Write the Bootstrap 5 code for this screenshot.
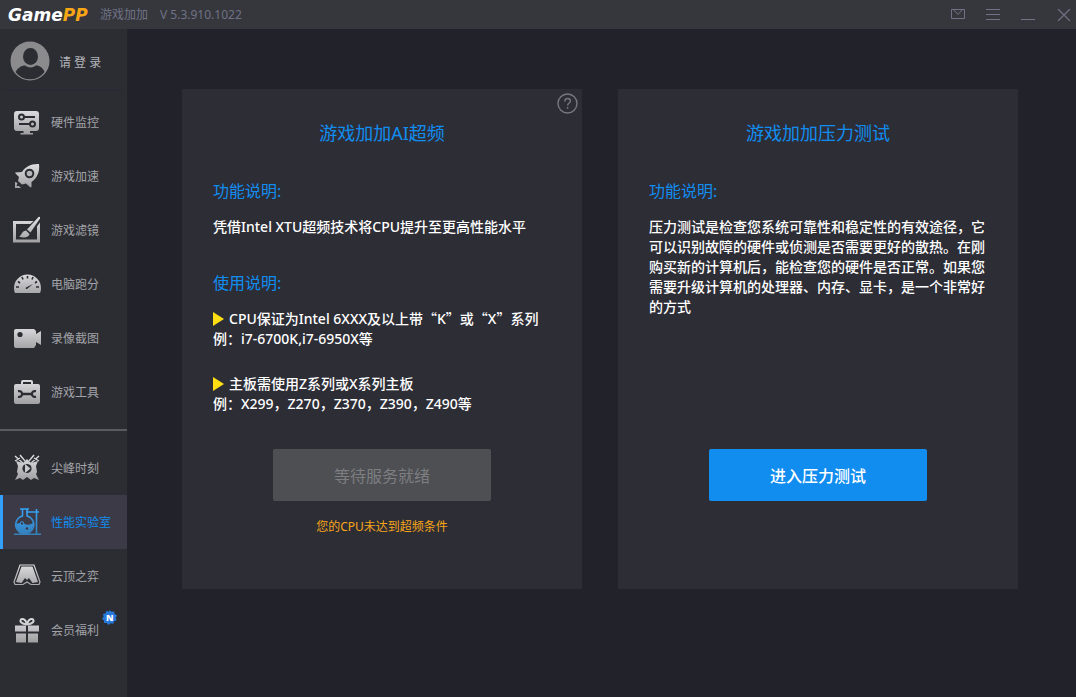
<!DOCTYPE html>
<html lang="zh-CN">
<head>
<meta charset="utf-8">
<meta name="viewport" content="width=device-width, initial-scale=1">
<title>GamePP 游戏加加</title>
<link href="https://cdn.jsdelivr.net/npm/bootstrap@5.3.0/dist/css/bootstrap.min.css" rel="stylesheet">
<style>
body { background: #22222b; color: #fff; font-family: "Noto Sans", "Noto Sans CJK SC", sans-serif; font-size: 14px; line-height: 20px; }
.titlebar { background: #36373c; height: 29px; color: #6f7286; font-size: 12px; }
.tools { gap: 20px; padding-right: 5px; }
.brand { font-family: "DejaVu Sans", sans-serif; font-weight: 700; font-style: italic; font-size: 17px; color: #fff; line-height: 28px; width: 92px; padding-left: 8px; }
.brand span { color: #f7a616; }
.winbtn { border: 0; background: none; color: #6f7286; padding: 0; width: 15px; height: 28px; display: flex; align-items: center; }
.side { width: 127px; background: #2c2d32; font-size: 12px; }
.login { height: 62px; color: #b4b5ba; padding-left: 10px; gap: 9px; text-decoration: none; }
.login svg { margin-top: 2px; }
.login span { padding-top: 6px; }
.sep-dark { height: 2px; margin: -2px 4px 4px; background: #292a34; }
.sep-light { height: 2px; background: #5a5b60; margin: 10px 0; }
.item { height: 54px; color: #a2a3a8; padding: 2px 0 0 12px; gap: 9px; border-radius: 0; position: relative; }
.item:hover { color: #fff; }
.item svg { width: 30px; height: 30px; flex: none; }
.item.active { background: #3b3a46; color: #118df0; box-shadow: inset 3px 0 #35a0fb; }
.item .newtag { position: absolute; left: 102px; top: 7px; width: 15px; height: 15px; }
.stage { padding: 60px 58px 60px 55px; }
.panels { display: grid; grid-template-columns: 1fr 1fr; gap: 36px; }
.panel { background: #2d2d36; min-height: 500px; padding: 30px 31px 28px; position: relative; }
.panel h1 { font-size: 18px; line-height: 28px; font-weight: 400; color: #118df0; text-align: center; margin: 0 0 32px; }
.panel h2 { font-size: 16px; line-height: 24px; font-weight: 400; color: #118df0; margin: 0 0 14px; }
.panel h2.usage { margin: 34px 0 13px; }
.panel p { margin: 0; font-weight: 500; }
.panel p.board { margin-top: 25px; }
.wide { font-family: "Noto Sans CJK SC", sans-serif; }
.tri { width: 11px; height: 14px; margin-right: 5px; vertical-align: -2px; }
.action { width: 218px; height: 52px; border-radius: 2px; border: 0; font-size: 16px; background: #118df0; font-weight: 500; padding: 2px 0 0; }
.action:disabled { background: #4e4f53; color: #7d7e81; opacity: 1; font-weight: 400; }
.warn { color: #f7a616; font-size: 12px; }
.help { position: absolute; right: 4px; top: 4px; width: 21px; height: 21px; padding: 0; border: 0; background: none; }
</style>
</head>
<body class="d-flex flex-column min-vh-100">
<svg width="0" height="0" class="position-absolute" aria-hidden="true"><defs>
<linearGradient id="g" gradientUnits="userSpaceOnUse" x1="0" y1="2" x2="0" y2="28"><stop offset="0" stop-color="#dedee1"/><stop offset="1" stop-color="#9b9b9e"/></linearGradient>
<linearGradient id="b" gradientUnits="userSpaceOnUse" x1="0" y1="2" x2="0" y2="28"><stop offset="0" stop-color="#36a2f5"/><stop offset="1" stop-color="#347eb7"/></linearGradient>
</defs></svg>
<header class="titlebar d-flex align-items-center">
  <div class="brand">Game<span>PP</span></div>
  <div class="ms-2">游戏加加</div>
  <div class="ms-2 ps-1">V 5.3.910.1022</div>
  <div class="tools ms-auto d-flex">
    <button class="winbtn" aria-label="消息"><svg width="15" height="11" viewBox="0 0 15 11" fill="none" stroke="currentColor"><path d="M.5.5h13v9H.5zM3 1l4 4.500L11 1"/></svg></button>
    <button class="winbtn" aria-label="菜单"><svg width="15" height="11" viewBox="0 0 15 11" stroke="currentColor"><path d="M0 .5h14M0 5.500h14M0 10.500h14"/></svg></button>
    <button class="winbtn" aria-label="最小化"><svg width="15" height="11" viewBox="0 0 15 11" stroke="currentColor"><path d="M0 10.500h14"/></svg></button>
    <button class="winbtn" aria-label="关闭"><svg width="15" height="12" viewBox="0 0 15 12" stroke="currentColor" stroke-width="1.200"><path d="M2 0l12 12M14 0L2 12"/></svg></button>
  </div>
</header>
<div class="d-flex flex-grow-1">
<nav class="side flex-shrink-0">
  <a href="#" class="login d-flex align-items-center">
    <svg width="40" height="40" viewBox="0 0 40 40"><circle cx="20" cy="20" r="19.500" fill="#8b8b8d"/><g fill="#2c2d32"><ellipse cx="20.500" cy="15.500" rx="7.500" ry="8.500"/><path d="M5.500 31C8 26.500 12 24.500 15 24.500Q20.500 28.500 26 24.500C30 24.500 33 27 34.500 31A18 18 0 0 1 5.500 31z"/></g></svg>
    <span>请 登 录</span>
  </a>
  <div class="sep-dark"></div>
  <div class="nav flex-column">
    <a href="#" class="nav-link item d-flex align-items-center"><svg viewBox="0 0 30 30"><path fill="url(#g)" d="M5 3h19a3 3 0 0 1 3 3v14a3 3 0 0 1-3 3h-6v2h3V26.500H8.500V25h3v-2H5a3 3 0 0 1-3-3V6a3 3 0 0 1 3-3z"/><g fill="none" stroke="#2c2d32" stroke-width="2"><circle cx="9.500" cy="9" r="2.500"/><path d="M12 9h11M7 16h11"/><circle cx="20.500" cy="16" r="2.500"/></g></svg>硬件监控</a>
    <a href="#" class="nav-link item d-flex align-items-center"><svg viewBox="0 0 30 30"><path fill="url(#g)" d="M27 2C19 1.500 13 5 10 10l-7 .5 1 1.500 3 3-1 4 4 3.500 4-1 4.500 4 1-.5V20C25 16 28 10 27 2zM3 20l2.500 1-1 3 2.500 0 2 2H3z"/><circle cx="17.500" cy="11.500" r="3.800" fill="#b5b5b8" stroke="#2c2d32" stroke-width="2"/></svg>游戏加速</a>
    <a href="#" class="nav-link item d-flex align-items-center"><svg viewBox="0 0 30 30"><path d="M2.500 6.500h24v18.500h-24z" fill="none" stroke="url(#g)" stroke-width="3"/><path d="M27 0 13 13l5.500 5.500L30 4z" fill="#2c2d32"/><path d="M26.500 1Q28.500 0 28 2.500L18.500 16.500 15 13.500z" fill="url(#g)"/><path fill="url(#g)" d="M14 14.500l3.500 3.500C17 21.500 12 22.500 7 20.500 9.500 20 9.500 15 14 14.500z"/></svg>游戏滤镜</a>
    <a href="#" class="nav-link item d-flex align-items-center"><svg viewBox="0 0 30 30"><path fill="url(#g)" d="M3 23Q2 21 2 18a13.500 13.500 0 0 1 27 0q0 3-1 5z"/><g stroke="#2c2d32" stroke-width="1.600"><path d="M15.500 6v2.500M10 7l1 2.500M21 7l-1 2.500M6 11.500l2 1.500M25 11.500l-2 1.500M4 17h3M27 17h-3"/></g><path d="M21 14l-7 3.500q-1 1.500 1 1.500z" fill="#2c2d32"/></svg>电脑跑分</a>
    <a href="#" class="nav-link item d-flex align-items-center"><svg viewBox="0 0 30 30"><path fill="url(#g)" d="M4 5h18l2 2v3l5-3v14l-5-3v3l-2 3H4a2 2 0 0 1-2-2V7a2 2 0 0 1 2-2z"/><circle cx="8" cy="10.500" r="2.600" fill="#2c2d32"/></svg>录像截图</a>
    <a href="#" class="nav-link item d-flex align-items-center"><svg viewBox="0 0 30 30"><path fill="url(#g)" fill-rule="evenodd" d="M9 6V4a2 2 0 0 1 2-2h8a2 2 0 0 1 2 2v2h5a2 2 0 0 1 2 2v16a2 2 0 0 1-2 2H4a2 2 0 0 1-2-2V8a2 2 0 0 1 2-2zM11 6h8V4h-8z"/><path d="M9 16h12" stroke="#2c2d32" stroke-width="2.500"/><g fill="none" stroke="#2c2d32" stroke-width="2.200"><path d="M6 13.200q4-.7 4 2.800t-4 2.800M24 13.200q-4-.7-4 2.800t4 2.800"/></g></svg>游戏工具</a>
  </div>
  <div class="sep-light"></div>
  <div class="nav flex-column">
    <a href="#" class="nav-link item d-flex align-items-center"><svg viewBox="0 0 30 30"><g stroke="url(#g)" stroke-width="1.400"><path d="M3 2l9 8M27 2l-9 8M8 1l5 6M22 1l-5 6M3 7l5-3M27 7l-5-3"/></g><path fill="url(#g)" d="M15 5l4 4 7-2-2 5 1 6-1 2 3 6-5-2-3 2-4-3-4 3-3-2-5 2 3-6-1-2 1-6-2-5 7 2z"/><circle cx="15" cy="14.500" r="4.600" fill="#2c2d32"/><path d="M13 10l5.500 4.500L13 19z" fill="#c9c9cc"/></svg>尖峰时刻</a>
    <a href="#" class="nav-link item active d-flex align-items-center" aria-current="page"><svg viewBox="0 0 30 30"><g stroke="url(#b)" fill="none" stroke-width="1.600"><path d="M8 1h9M10.500 1v7A9 9 0 1 0 15 8V1M14 4h13M24.500 1v25M2 26.200h27"/></g><path fill="url(#b)" d="M4 16q4-2 8.500 0t8.500-1C22 20 18 25.500 12.500 25.500S3.500 21 4 16z"/><circle cx="10" cy="15.500" r="1.800" fill="#3b3a46" stroke="#36a2f5"/><circle cx="15" cy="20.500" r="1.300" fill="#3b3a46"/></svg>性能实验室</a>
    <a href="#" class="nav-link item d-flex align-items-center"><svg viewBox="0 0 30 30"><path fill="none" stroke="url(#g)" stroke-width="1.200" d="M8 3h14l6 17-1 2.500h-8L15 20l-4 2.500H3L2 20z"/><path fill="url(#g)" d="M9.500 4.500h11L26 20l-5.500 1-3.500-5-2 2-2-2-3.500 5L4 20z"/></svg>云顶之弈</a>
    <a href="#" class="nav-link item d-flex align-items-center"><svg viewBox="0 0 30 30"><path fill="url(#g)" d="M3 9.500h11v6H3zM16 9.500h11v6H16zM4 17.500h10v9H4zM16 17.500h10v9H16z"/><g stroke="url(#g)" stroke-width="2" fill="none"><path d="M15 8.500C12 8 8 7 8.500 4.500S13.500 2 15 8.500C16.500 2 21 2 21.500 4.500S18 8 15 8.500z"/></g></svg>会员福利
      <svg class="newtag" viewBox="0 0 15 15"><path fill="#2679da" d="M7.500 0l2 1.800 2.600-.4.500 2.600L15 5.500l-1.300 2.300.9 2.500-2.500.9-.8 2.500-2.600-.5L6.500 15l-1.800-2-2.600.1L2 10.500 0 8.700l1.600-2L1 4l2.600-.7.9-2.500 2.500.9z"/><text x="4" y="11" font-family="Open Sans" font-weight="800" font-size="9" fill="#fff">N</text></svg></a>
  </div>
</nav>
<main class="stage flex-grow-1">
 <div class="panels">
  <section class="panel d-flex flex-column">
    <button class="help" aria-label="帮助"><svg class="d-block" width="21" height="21" viewBox="0 0 21 21" fill="none" stroke="#77787c" stroke-width="1.400"><circle cx="10.500" cy="10.500" r="9.500"/><path d="M7.800 8.500q0-3 2.800-3t2.800 2.500c0 2-2.800 2-2.800 4.500M10.600 14v1.700"/></svg></button>
    <h1>游戏加加AI超频</h1>
    <h2>功能说明:</h2>
    <p>凭借Intel XTU超频技术将CPU提升至更高性能水平</p>
    <h2 class="usage">使用说明:</h2>
    <p><svg class="tri" viewBox="0 0 11 14"><path fill="#ffde14" d="M0 0l11 7-11 7z"/></svg>CPU保证为Intel 6XXX及以上带<span class="wide">“</span>K<span class="wide">”</span>或<span class="wide">“</span>X<span class="wide">”</span>系列<br>例：i7-6700K,i7-6950X等</p>
    <p class="board"><svg class="tri" viewBox="0 0 11 14"><path fill="#ffde14" d="M0 0l11 7-11 7z"/></svg>主板需使用Z系列或X系列主板<br>例：X299，Z270，Z370，Z390，Z490等</p>
    <div class="text-center mt-auto pb-4">
      <button class="btn btn-primary action" disabled>等待服务就绪</button>
      <div class="warn mt-3">您的CPU未达到超频条件</div>
    </div>
  </section>
  <section class="panel d-flex flex-column">
    <h1>游戏加加压力测试</h1>
    <h2>功能说明:</h2>
    <p>压力测试是检查您系统可靠性和稳定性的有效途径，它可以识别故障的硬件或侦测是否需要更好的散热。在刚购买新的计算机后，能检查您的硬件是否正常。如果您需要升级计算机的处理器、内存、显卡，是一个非常好的方式</p>
    <div class="text-center mt-auto pb-4">
      <button class="btn btn-primary action">进入压力测试</button>
      <div class="warn mt-3" aria-hidden="true">&nbsp;</div>
    </div>
  </section>
 </div>
</main>
</div>
<script src="https://cdn.jsdelivr.net/npm/bootstrap@5.3.0/dist/js/bootstrap.bundle.min.js"></script>
</body>
</html>
